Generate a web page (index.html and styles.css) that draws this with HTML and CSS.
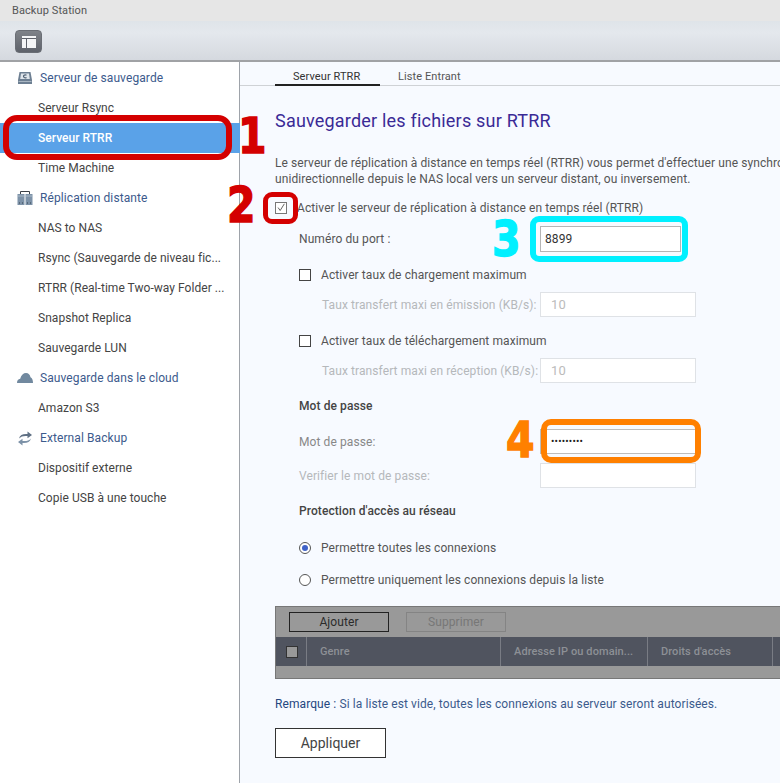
FILE: index.html
```html
<!DOCTYPE html>
<html lang="fr">
<head>
<meta charset="utf-8">
<title>Backup Station</title>
<link rel="stylesheet" href="styles.css">
</head>
<body>
<div class="app">
  <header class="titlebar">Backup Station</header>
  <div class="toolbar">
    <span class="tool-btn">
      <svg width="14" height="12" viewBox="0 0 14 12"><rect width="14" height="12" fill="#f4f5f6"/><path d="M0 2.500h14M4.500 3v9" stroke="#5e626a" fill="none"/></svg>
    </span>
  </div>
  <div class="main">
    <nav class="sidebar">
      <div class="group">
        <svg class="gicon" width="16" height="12" viewBox="0 0 16 12"><path d="M2.500 0h11l1.500 8v4H1V8z" fill="#6d7f92"/><path d="M4 1.500h8l.8 5.500H3.200z" fill="#dfe5eb"/><path d="M9.500 3.200a1.800 1.500 0 1 0 0 2.300" fill="none" stroke="#4f6072" stroke-width="1.200"/><path d="M1.500 9.500h13" stroke="#a9b6c2"/></svg>
        Serveur de sauvegarde
      </div>
      <div class="item">Serveur Rsync</div>
      <div class="item active">Serveur RTRR</div>
      <div class="item">Time Machine</div>
      <div class="group">
        <svg class="gicon" width="16" height="14" viewBox="0 0 16 14"><path d="M3.500 3V.5h9V3" stroke="#3a3f46" fill="none"/><rect x="0.500" y="3" width="7" height="11" fill="#7d92a8"/><rect x="8.500" y="3" width="7" height="11" fill="#7d92a8"/><path d="M1 5h6M9 5h6" stroke="#a9b8c7"/><path d="M2 12h1M5 12h1M10 12h1M13 12h1" stroke="#33404d"/></svg>
        Réplication distante
      </div>
      <div class="item">NAS to NAS</div>
      <div class="item">Rsync (Sauvegarde de niveau fic...</div>
      <div class="item">RTRR (Real-time Two-way Folder ...</div>
      <div class="item">Snapshot Replica</div>
      <div class="item">Sauvegarde LUN</div>
      <div class="group">
        <svg class="gicon" width="16" height="10" viewBox="0 0 16 10"><path d="M0 10c0-2.500 1.200-4 3.200-4.200C4.200 2 6.500 0 9 0c2.500 0 4 1.800 4.500 4.200 1.600.6 2.500 3 2.500 5.800z" fill="#71899f"/></svg>
        Sauvegarde dans le cloud
      </div>
      <div class="item">Amazon S3</div>
      <div class="group">
        <svg class="gicon" width="16" height="15" viewBox="0 0 16 15"><path d="M2 7.500C2.800 4 6 2.600 10.500 3V0.500L15 4l-4.500 3.200V5C7 4.600 4 5.200 2 7.500z" fill="#5f7084"/><path d="M14 7.500c-.8 3.500-4 4.900-8.500 4.500v2.500L1 11l4.500-3.200V10c3.500.4 6.500-.2 8.500-2.500z" fill="#7d92a8"/></svg>
        External Backup
      </div>
      <div class="item">Dispositif externe</div>
      <div class="item">Copie USB à une touche</div>
    </nav>
    <section class="content">
      <div class="tabs">
        <span class="tab current">Serveur RTRR</span>
        <span class="tab">Liste Entrant</span>
      </div>
      <div class="body">
        <h1 class="title">Sauvegarder les fichiers sur RTRR</h1>
        <div class="intro-clip"><p class="intro">Le serveur de réplication à distance en temps réel (RTRR) vous permet d'effectuer une synchro</p><p class="intro">unidirectionnelle depuis le NAS local vers un serveur distant, ou inversement.</p></div>
        <div class="row enable"><span class="check checked"><svg width="12" height="12" viewBox="0 0 12 12"><path d="M2.500 5.500l2.500 3.500L10 1" fill="none" stroke="#444" stroke-width="1"/></svg></span><span class="enable-label">Activer le serveur de réplication à distance en temps réel (RTRR)</span></div>
        <div class="field port"><label class="lbl">Numéro du port :</label><span class="input narrow">8899</span></div>
        <div class="row sub gap-a"><span class="check"></span><span class="opt">Activer taux de chargement maximum</span></div>
        <div class="field rate"><label class="lbl dim">Taux transfert maxi en émission (KB/s):</label><span class="input off">10</span></div>
        <div class="row sub gap-b"><span class="check"></span><span class="opt">Activer taux de téléchargement maximum</span></div>
        <div class="field rate"><label class="lbl dim">Taux transfert maxi en réception (KB/s):</label><span class="input off">10</span></div>
        <h2 class="heading gap-c">Mot de passe</h2>
        <div class="field pw"><label class="lbl muted">Mot de passe:</label><span class="input lined">•••••••••</span></div>
        <div class="field verify"><label class="lbl dim">Verifier le mot de passe:</label><span class="input off"></span></div>
        <h2 class="heading gap-c">Protection d'accès au réseau</h2>
        <div class="row sub gap-d"><span class="radio on"></span><span class="opt">Permettre toutes les connexions</span></div>
        <div class="row sub gap-e"><span class="radio"></span><span class="opt">Permettre uniquement les connexions depuis la liste</span></div>
        <div class="table">
          <div class="table-tools"><span class="tbtn">Ajouter</span><span class="tbtn disabled">Supprimer</span></div>
          <div class="table-head">
            <span class="col c0"><span class="hcheck"></span></span>
            <span class="col c1">Genre</span>
            <span class="col c2">Adresse IP ou domain...</span>
            <span class="col c3">Droits d'accès</span>
          </div>
          <div class="table-empty"></div>
        </div>
        <p class="note"><b>Remarque :</b> Si la liste est vide, toutes les connexions au serveur seront autorisées.</p>
        <button class="apply">Appliquer</button>
      </div>
    </section>
  </div>
  <div class="mark m-box1"></div>
  <div class="mark m-box2"></div>
  <div class="mark m-box3"></div>
  <div class="mark m-box4"></div>
  <span class="digit d1">1</span>
  <span class="digit d2">2</span>
  <span class="digit d3">3</span>
  <span class="digit d4">4</span>
</div>
</body>
</html>
```
FILE: styles.css
```css
* { box-sizing: border-box; }
html, body { margin: 0; padding: 0; }
body { font-family: Roboto, "Liberation Sans", sans-serif; font-size: 12px; letter-spacing: 0.09px; color: #444; background: #f7faff; }
.app { position: relative; width: 780px; height: 783px; overflow: hidden; display: flex; flex-direction: column; }
.titlebar { height: 21px; line-height: 22px; padding-left: 12px; background: #e6e6e6; color: #555; font-size: 11px; flex: none; }
.toolbar { height: 41px; flex: none; padding: 9px 0 0 15px; background: linear-gradient(#dfe4e9 0, #e4e8ed 30%, #d5d9df 100%); border-bottom: 2px solid #a0a2a5; }
.tool-btn { display: flex; align-items: center; justify-content: center; width: 27px; height: 23px; border-radius: 4px; background: linear-gradient(#7f8389, #5e626a); border: 1px solid #6a6e75; }
.main { flex: 1; display: flex; min-height: 0; }
.sidebar { width: 240px; flex: none; background: #fff; border-right: 1px solid #9ea3aa; padding-top: 1px; letter-spacing: 0.04px; }
.group { height: 30px; display: flex; align-items: center; padding-left: 17px; gap: 7px; color: #3c5a8c; letter-spacing: 0.09px; }
.gicon { flex: none; width: 16px; }
.item { height: 30px; line-height: 30px; padding-left: 38px; color: #444; white-space: nowrap; }
.item.active { background: #5aa2e8; color: #fff; font-weight: 500; margin-right: -1px; position: relative; }
.content { flex: 1; min-width: 0; overflow: hidden; }
.tabs { height: 24px; padding-left: 35px; display: flex; border-bottom: 1px solid #cfd2d6; }
.tab { padding: 0 18px; line-height: 30px; height: 24px; font-size: 11px; color: #555; }
.tab.current { color: #333; border-bottom: 2px solid #222; width: 105px; }
.body { padding-left: 35px; }
.title { margin: 23px 0 0; font-size: 18px; letter-spacing: 0.2px; line-height: 24px; font-weight: 400; color: #3a2a96; white-space: nowrap; }
.intro-clip { margin-top: 22px; overflow: hidden; }
.intro { margin: 0; line-height: 16px; white-space: nowrap; color: #555; }
.row { display: flex; align-items: center; height: 20px; }
.enable { margin-top: 11px; }
.enable-label { margin-left: 10px; color: #555; }
.sub { padding-left: 24px; }
.opt { margin-left: 10px; color: #555; }
.check { width: 12px; height: 12px; flex: none; border: 1px solid #444; background: #fff; display: flex; align-items: center; justify-content: center; }
.check.checked { border-color: #777; }
.radio { width: 12px; height: 12px; flex: none; border: 1px solid #555; border-radius: 50%; background: #fff; display: flex; align-items: center; justify-content: center; }
.radio.on::after { content: ""; width: 6px; height: 6px; border-radius: 50%; background: #3f62c8; }
.field { display: flex; align-items: center; padding-left: 24px; }
.lbl { width: 241px; flex: none; white-space: nowrap; color: #555; }
.lbl.dim { color: #b5b8bb; }
.lbl.muted { color: #888; }
.input { display: block; width: 156px; height: 25px; line-height: 24px; padding-left: 10px; background: #fff; border: 1px solid #dfe2e6; color: #333; }
.input.narrow { width: 141px; height: 26px; padding-left: 4px; border: 1px solid #b5b5b5; }
.input.off { color: #bbb; font-size: 13px; }
.input.lined { border-color: #bdbdbd; padding-left: 10px; letter-spacing: 0.2px; font-size: 10px; color: #222; }
.port { margin-top: 8px; }
.gap-a { margin-top: 13px; }
.gap-b { margin-top: 14px; }
.gap-c { margin-top: 13px; }
.gap-d { margin-top: 17px; }
.gap-e { margin-top: 12px; }
.rate { margin-top: 7px; }
.rate .lbl { padding-left: 23px; }
.pw { margin-top: 13px; }
.verify { margin-top: 9px; }
.heading { margin-bottom: 0; height: 20px; line-height: 20px; padding-left: 24px; font-size: 12px; font-weight: 500; color: #444; }
.table { margin-top: 16px; height: 73px; border: 1px solid #777; border-right: 0; background: #999; }
.table-tools { height: 30px; padding: 5px 0 0 13px; display: flex; gap: 17px; }
.tbtn { width: 100px; height: 20px; line-height: 18px; text-align: center; border: 1px solid #222; color: #2b2b2b; }
.tbtn.disabled { border-color: #848484; color: #777; }
.table-head { height: 29px; background: #50545f; display: flex; color: #8d9096; font-size: 11px; font-weight: 500; }
.col { display: flex; align-items: center; padding-left: 13px; border-right: 1px solid #797c84; white-space: nowrap; flex: none; }
.c0 { width: 31px; padding-left: 10px; }
.c1 { width: 194px; }
.c2 { width: 147px; }
.c3 { width: 125px; }
.hcheck { width: 12px; height: 12px; background: #999; border: 1px solid #333; }
.table-empty { height: 12px; }
.note { margin: 17px 0 0; line-height: 16px; color: #3c5a8c; white-space: nowrap; }
.note b { font-weight: 400; color: #24477f; }
.apply { display: block; margin-top: 16px; width: 111px; height: 30px; background: #fff; border: 1px solid #333; font: 400 14px Roboto, "Liberation Sans", sans-serif; color: #444; padding: 0; }
.mark { position: absolute; background: transparent; }
.m-box1 { left: 3px; top: 115px; width: 229px; height: 45px; border: 6px solid #d40000; border-radius: 14px; }
.m-box2 { left: 263px; top: 192px; width: 35px; height: 32px; border: 5px solid #d40000; border-radius: 9px; }
.m-box3 { left: 530px; top: 216px; width: 158px; height: 46px; border: 6px solid #00f0ff; border-radius: 9px; }
.m-box4 { left: 541px; top: 419px; width: 160px; height: 44px; border: 6px solid #ff8000; border-radius: 10px; }
.digit { position: absolute; font-family: "DejaVu Sans", sans-serif; font-weight: 700; font-size: 50px; line-height: 50px; letter-spacing: 0; transform: scaleX(0.82); transform-origin: left top; -webkit-text-stroke: 1.500px currentColor; }
.d1 { left: 238px; top: 111px; color: #d40000; }
.d2 { left: 227px; top: 180px; color: #d40000; }
.d3 { left: 492px; top: 214px; color: #00f0ff; }
.d4 { left: 506px; top: 415px; color: #ff8000; }
```
